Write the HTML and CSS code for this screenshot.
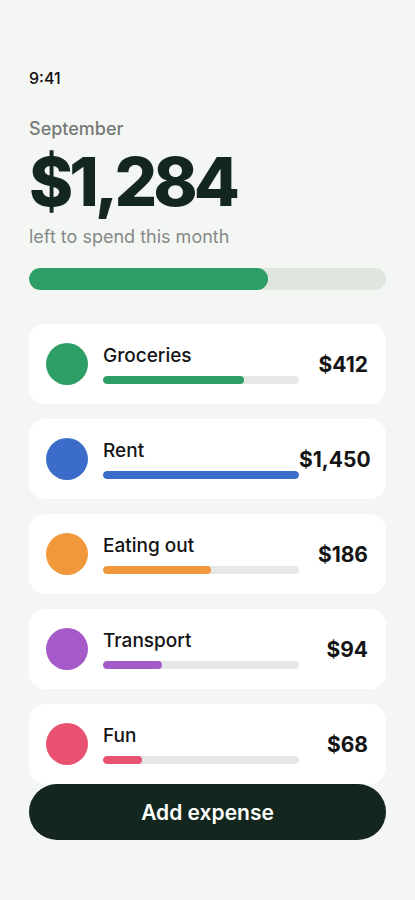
FILE: index.html
```html
<!DOCTYPE html>
<html>
<head>
<meta charset="utf-8">
<link rel="stylesheet" href="styles.css">
</head>
<body>
<div class="screen">
  <div class="status">9:41</div>
  <div class="month">September</div>
  <div class="total">$1,284</div>
  <div class="sub">left to spend this month</div>
  <div class="budget"><div class="budget-fill"></div></div>
  <div class="list">
    <div class="card">
      <div class="dot green"></div>
      <div class="info">
        <div class="name">Groceries</div>
        <div class="track"><div class="fill green" style="width:72%"></div></div>
      </div>
      <div class="amount">$412</div>
    </div>
    <div class="card">
      <div class="dot blue"></div>
      <div class="info">
        <div class="name">Rent</div>
        <div class="track"><div class="fill blue" style="width:100%"></div></div>
      </div>
      <div class="amount">$1,450</div>
    </div>
    <div class="card">
      <div class="dot orange"></div>
      <div class="info">
        <div class="name">Eating out</div>
        <div class="track"><div class="fill orange" style="width:55%"></div></div>
      </div>
      <div class="amount">$186</div>
    </div>
    <div class="card">
      <div class="dot purple"></div>
      <div class="info">
        <div class="name">Transport</div>
        <div class="track"><div class="fill purple" style="width:30%"></div></div>
      </div>
      <div class="amount">$94</div>
    </div>
    <div class="card">
      <div class="dot pink"></div>
      <div class="info">
        <div class="name">Fun</div>
        <div class="track"><div class="fill pink" style="width:20%"></div></div>
      </div>
      <div class="amount">$68</div>
    </div>
  </div>
  <button class="add">Add expense</button>
</div>
</body>
</html>
```
FILE: styles.css
```css
html, body {
  margin: 0;
  padding: 0;
  background: #f4f6f3;
}
body {
  font-family: Inter, "Noto Sans", sans-serif;
  color: #141a16;
}
.screen {
  width: 415px;
  height: 900px;
  box-sizing: border-box;
  padding: 68px 29px 0 29px;
  display: flex;
  flex-direction: column;
}
.status {
  font-size: 16px;
  line-height: 20px;
  font-weight: 500;
  color: #111;
}
.month {
  margin-top: 29px;
  font-size: 18px;
  line-height: 24px;
  font-weight: 500;
  color: #777b78;
}
.total {
  margin-top: 7px;
  font-size: 67px;
  line-height: 68px;
  font-weight: 800;
  letter-spacing: -4px;
  color: #13271e;
}
.sub {
  margin-top: 9px;
  font-size: 18px;
  line-height: 24px;
  color: #858987;
}
.budget {
  margin-top: 19px;
  height: 22px;
  border-radius: 11px;
  background: #dfe6e0;
  overflow: hidden;
}
.budget-fill {
  width: 67%;
  height: 100%;
  border-radius: 11px;
  background: #2e9e67;
}
.list {
  margin-top: 34px;
  display: flex;
  flex-direction: column;
  gap: 15px;
}
.card {
  height: 80px;
  background: #fff;
  border-radius: 16px;
  display: flex;
  align-items: center;
  padding: 0 18px 0 17px;
  box-sizing: border-box;
}
.dot {
  width: 42px;
  height: 42px;
  border-radius: 50%;
  flex: none;
}
.info {
  margin-left: 15px;
  width: 196px;
  flex: none;
}
.name {
  font-size: 19px;
  line-height: 24px;
  font-weight: 500;
  color: #141414;
}
.track {
  margin-top: 8px;
  height: 8px;
  border-radius: 4px;
  background: #e6e8e6;
  overflow: hidden;
}
.fill {
  height: 100%;
  border-radius: 4px;
}
.amount {
  margin-left: auto;
  font-size: 21px;
  font-weight: 700;
  color: #141414;
}
.green { background: #2e9e67; }
.blue { background: #3b6cc9; }
.orange { background: #f0983b; }
.purple { background: #a45ac8; }
.pink { background: #e85270; }
.add {
  margin-top: 0;
  height: 56px;
  border: none;
  border-radius: 28px;
  background: #13271e;
  color: #fff;
  font-family: Inter, "Noto Sans", sans-serif;
  font-size: 21px;
  font-weight: 600;
}
```
